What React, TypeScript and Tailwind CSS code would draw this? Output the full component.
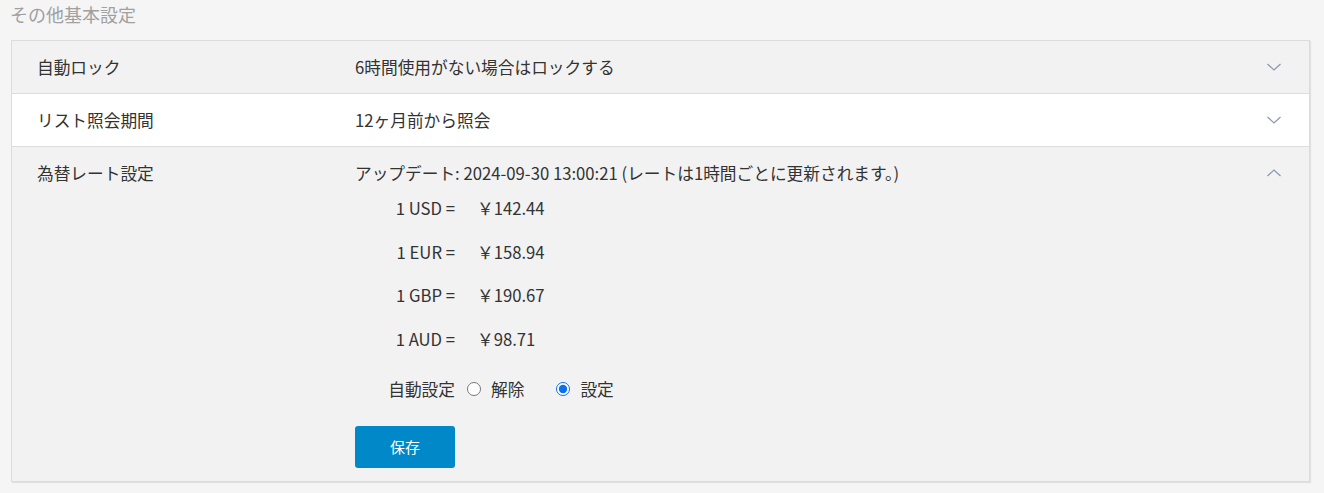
import { useState } from 'react'

const font = { fontFamily: '"Noto Sans CJK JP", "Noto Sans", sans-serif' }

function Chevron({ up }: { up?: boolean }): React.JSX.Element {
  return (
    <svg viewBox="0 0 16 10" className="h-[10px] w-[16px] text-[#8a96b4]" fill="none" stroke="currentColor" strokeWidth="1.2">
      <path d={up ? 'M1.5 8L8 2l6.5 6' : 'M1.5 2L8 8l6.5-6'} />
    </svg>
  )
}

const rates = [
  { code: 'USD', value: '142.44' },
  { code: 'EUR', value: '158.94' },
  { code: 'GBP', value: '190.67' },
  { code: 'AUD', value: '98.71' },
]

function Row({
  label,
  children,
  white,
  up,
}: {
  label: string
  children: React.ReactNode
  white?: boolean
  up?: boolean
}): React.JSX.Element {
  return (
    <div className={`flex border-b border-[#dedede] last:border-b-0 ${white ? 'bg-white' : 'bg-[#f2f2f2]'}`}>
      <div className="w-[343px] shrink-0 pl-[25px] pt-[14px] pb-[14px] leading-[24px]">{label}</div>
      <div className="min-w-0 flex-1 pt-[14px] pb-[14px] leading-[24px]">{children}</div>
      <div className="flex w-[43px] shrink-0 justify-start pt-[21px]">
        <Chevron up={up} />
      </div>
    </div>
  )
}

export default function App(): React.JSX.Element {
  const [auto, setAuto] = useState<'off' | 'on'>('on')

  return (
    <div className="min-h-[493px] bg-[#f5f5f5] pl-[11px] pr-[14px] text-[16.7px] text-[#333]" style={font}>
      <div className="-ml-[1px] pt-[2px] pb-[13px] text-[18px] leading-[25px] text-[#a0a0a0]">その他基本設定</div>
      <div className="border border-[#dcdcdc] shadow-[1px_1px_1px_rgba(0,0,0,0.08)]">
        <Row label="自動ロック">6時間使用がない場合はロックする</Row>
        <Row label="リスト照会期間" white>
          12ヶ月前から照会
        </Row>
        <Row label="為替レート設定" up>
          <div>アップデート: 2024-09-30 13:00:21 (レートは1時間ごとに更新されます。)</div>
          <div className="mt-[11px] flex flex-col gap-[19.5px]">
            {rates.map((r) => (
              <div key={r.code} className="flex">
                <span className="w-[100px] text-right">1 {r.code} =</span>
                <span className="ml-[22px]">￥{r.value}</span>
              </div>
            ))}
          </div>
          <div className="mt-[26px] flex items-center">
            <span className="w-[100px] text-right">自動設定</span>
            <label className="ml-[12px] flex items-center">
              <input
                type="radio"
                name="auto"
                checked={auto === 'off'}
                onChange={() => setAuto('off')}
                className="m-0 h-[14px] w-[14px] accent-[#0b6ff2]"
              />
              <span className="ml-[10px]">解除</span>
            </label>
            <label className="ml-[32px] flex items-center">
              <input
                type="radio"
                name="auto"
                checked={auto === 'on'}
                onChange={() => setAuto('on')}
                className="m-0 h-[14px] w-[14px] accent-[#0b6ff2]"
              />
              <span className="ml-[10px]">設定</span>
            </label>
          </div>
          <button className="mt-[25px] mb-[-1px] h-[42px] w-[100px] rounded-[3px] bg-[#0088c8] text-[15px] text-white">
            保存
          </button>
        </Row>
      </div>
    </div>
  )
}
